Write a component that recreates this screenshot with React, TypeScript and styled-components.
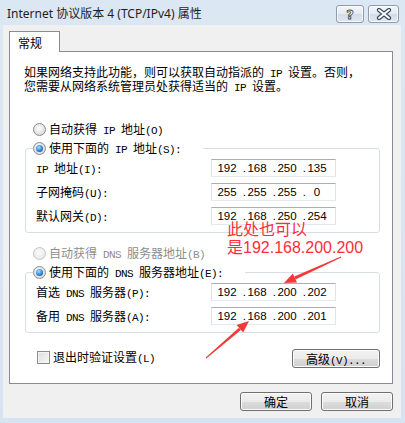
import React from 'react';
import styled, { createGlobalStyle } from 'styled-components';

const GlobalStyle = createGlobalStyle`
    html, body {
        margin: 0;
        padding: 0;
        background: #d9e4f1;
    }
    body {
        font-family: "Noto Sans CJK SC", "Noto Sans", sans-serif;
        font-size: 12px;
        line-height: 14px;
        color: #000;
    }
`;

const ipGroup = [
    { label: 'IP 地址(I):', octets: ['192', '168', '250', '135'] },
    { label: '子网掩码(U):', octets: ['255', '255', '255', '0'] },
    { label: '默认网关(D):', octets: ['192', '168', '250', '254'] },
];

const dnsGroup = [
    { label: '首选 DNS 服务器(P):', octets: ['192', '168', '200', '202'] },
    { label: '备用 DNS 服务器(A):', octets: ['192', '168', '200', '201'] },
];

// the dialog font sets latin at half width, so ascii runs get their own span
const sim = (text: string) =>
    text.split(/([\x20-\x7e]+)/).map((part, i) =>
        /^[\x20-\x7e]+$/.test(part) ? <Half key={i}>{part}</Half> : <React.Fragment key={i}>{part}</React.Fragment>,
    );

const IpBox = ({ octets }: { octets: string[] }) => (
    <IpInput>
        {octets.map((o, i) => (
            <React.Fragment key={i}>
                {i > 0 && <Dot>.</Dot>}
                <Octet>{o}</Octet>
            </React.Fragment>
        ))}
    </IpInput>
);

const App = () => (
    <>
        <GlobalStyle />
        <Window>
            <TitleBar>
                <Title>Internet 协议版本 4 (TCP/IPv4) 属性</Title>
                <CaptionButtons>
                    <CaptionBtn $w={28}>
                        <HelpGlyph>?</HelpGlyph>
                    </CaptionBtn>
                    <CaptionBtn $w={31}>
                        <svg width="16" height="12" viewBox="0 0 16 12">
                            <path d="M3 2 L13 10 M13 2 L3 10" stroke="#3b4656" strokeWidth="4.2" strokeLinecap="round" />
                            <path d="M3 2 L13 10 M13 2 L3 10" stroke="#fff" strokeWidth="2" strokeLinecap="round" />
                        </svg>
                    </CaptionBtn>
                </CaptionButtons>
            </TitleBar>
            <Client>
                <Tab>常规</Tab>
                <Panel>
                    <Intro>
                        <Line>{sim('如果网络支持此功能，则可以获取自动指派的 IP 设置。否则，')}</Line>
                        <Line>{sim('您需要从网络系统管理员处获得适当的 IP 设置。')}</Line>
                    </Intro>

                    <Option>
                        <Radio />
                        <Line>{sim('自动获得 IP 地址(O)')}</Line>
                    </Option>
                    <Group>
                        <Legend>
                            <Radio $checked />
                            <Line>{sim('使用下面的 IP 地址(S):')}</Line>
                        </Legend>
                        {ipGroup.map((r) => (
                            <Row key={r.label}>
                                <Line>{sim(r.label)}</Line>
                                <IpBox octets={r.octets} />
                            </Row>
                        ))}
                    </Group>

                    <Option $spaced $disabled>
                        <Radio $disabled />
                        <Line>{sim('自动获得 DNS 服务器地址(B)')}</Line>
                    </Option>
                    <Group>
                        <Legend>
                            <Radio $checked />
                            <Line>{sim('使用下面的 DNS 服务器地址(E):')}</Line>
                        </Legend>
                        {dnsGroup.map((r) => (
                            <Row key={r.label}>
                                <Line>{sim(r.label)}</Line>
                                <IpBox octets={r.octets} />
                            </Row>
                        ))}
                    </Group>

                    <BottomRow>
                        <Check>
                            <CheckBox />
                            <Line>{sim('退出时验证设置(L)')}</Line>
                        </Check>
                        <Button $w={88}>
                            <Line>{sim('高级(V)...')}</Line>
                        </Button>
                    </BottomRow>
                </Panel>
                <Footer>
                    <Button $w={72}>确定</Button>
                    <Button $w={72}>取消</Button>
                </Footer>
            </Client>

            <Note>
                此处也可以
                <br />
                是192.168.200.200
            </Note>
            <Arrows width="405" height="423" viewBox="0 0 405 423">
                <polygon points="341.2,257.5 340.8,256.5 294.3,276.6 295.5,279.4" fill="#f23a3a" />
                <polygon points="284,283 297,282.6 292.8,273.5" fill="#f23a3a" />
                <polygon points="206.3,358.4 205.7,357.6 238.9,327.7 240.9,329.9" fill="#f23a3a" />
                <polygon points="249,321 243.2,332.6 236.6,325" fill="#f23a3a" />
            </Arrows>
        </Window>
    </>
);

const Window = styled.div`
    position: relative;
    display: flex;
    flex-direction: column;
    width: 405px;
    height: 423px;
    background: linear-gradient(#dce7f4, #d6e3f1);
`;

const TitleBar = styled.div`
    display: flex;
    align-items: center;
    justify-content: space-between;
    box-sizing: border-box;
    height: 25px;
    padding: 3px 6px 0 7px;
`;

const Title = styled.div`
    font-family: "Noto Sans", "Noto Sans CJK SC", sans-serif;
    font-size: 12px;
    color: #1e1e1e;
`;

const CaptionButtons = styled.div`
    display: flex;
    gap: 4px;
`;

const CaptionBtn = styled.div<{ $w: number }>`
    display: flex;
    align-items: center;
    justify-content: center;
    box-sizing: border-box;
    width: ${(p) => p.$w}px;
    height: 18px;
    border: 1px solid #8d9cb0;
    border-radius: 3px;
    background: linear-gradient(#f4f7fb, #e3eaf3 50%, #d3dde9 51%, #dfe7f1);
    box-shadow: inset 0 0 0 1px rgba(255, 255, 255, 0.7);
`;

const HelpGlyph = styled.span`
    font-family: "DejaVu Sans", sans-serif;
    font-weight: bold;
    font-size: 13px;
    line-height: 1;
    color: #fff;
    -webkit-text-stroke: 0.8px #3b4656;
`;

const Client = styled.div`
    display: flex;
    flex-direction: column;
    flex: 1;
    margin: 0 4px 5px 3px;
    padding: 6px 8px 0 6px;
    background: #f0f0f0;
`;

const Tab = styled.div`
    position: relative;
    z-index: 1;
    box-sizing: border-box;
    width: 51px;
    height: 21px;
    margin-bottom: -1px;
    padding: 4px 0 0 8px;
    border: 1px solid #898c95;
    border-bottom: none;
    background: #fff;
`;

const Panel = styled.div`
    display: flex;
    flex-direction: column;
    box-sizing: border-box;
    height: 333px;
    padding: 12px 12px 0 14px;
    border: 1px solid #898c95;
    background: #fff;
`;

const Line = styled.span`
    display: block;
    height: 14px;
    line-height: 14px;
    white-space: pre;
`;

const Half = styled.span`
    font-family: "Liberation Mono", monospace;
    font-size: 11px;
    line-height: 1;
    letter-spacing: -0.6px;
`;

const Intro = styled.div`
    display: flex;
    flex-direction: column;
    margin-top: 1px;
`;

const Option = styled.div<{ $spaced?: boolean; $disabled?: boolean }>`
    display: flex;
    align-items: center;
    gap: 3px;
    height: 16px;
    margin: ${(p) => (p.$spaced ? '12px' : '28px')} 0 0 9px;
    color: ${(p) => (p.$disabled ? '#8d8d8d' : '#000')};
`;

const Radio = styled.span<{ $checked?: boolean; $disabled?: boolean }>`
    position: relative;
    flex: none;
    box-sizing: border-box;
    width: 13px;
    height: 13px;
    border-radius: 50%;
    border: 1px solid ${(p) => (p.$disabled ? '#c4c4c4' : '#8b8b8b')};
    background: ${(p) =>
        p.$disabled
            ? 'radial-gradient(circle at 45% 40%, #fafafa, #e6e6e6)'
            : 'radial-gradient(circle at 45% 40%, #f6f6f6 20%, #d2d2d2 90%)'};
    &::after {
        content: '';
        display: ${(p) => (p.$checked ? 'block' : 'none')};
        position: absolute;
        inset: 2px;
        border-radius: 50%;
        background: radial-gradient(circle at 40% 35%, #9fe2ff, #2c86d8 55%, #0b3d77);
    }
`;

const Group = styled.fieldset`
    margin: 3px 0 0 1px;
    padding: 0 0 4px 10px;
    border: 1px solid #d5dfe5;
    border-radius: 3px;
    min-width: 0;
`;

const Legend = styled.legend`
    display: flex;
    align-items: center;
    gap: 3px;
    height: 16px;
    margin-left: -3px;
    padding: 0 22px 0 0;
`;

const Row = styled.div`
    display: flex;
    align-items: center;
    justify-content: space-between;
    height: 24px;
    padding-right: 43px;
`;

const IpInput = styled.div`
    display: flex;
    align-items: center;
    box-sizing: border-box;
    width: 125px;
    height: 18px;
    padding-left: 4px;
    border: 1px solid #e2e3ea;
    border-top-color: #abadb3;
    border-bottom-color: #e3e9ef;
    background: #fff;
    font-family: "Liberation Sans", Arial, sans-serif;
    font-size: 11.5px;
`;

const Octet = styled.span`
    width: 22px;
    text-align: center;
`;

const Dot = styled.span`
    width: 8px;
    text-align: right;
`;

const BottomRow = styled.div`
    display: flex;
    align-items: center;
    justify-content: space-between;
    margin: 16px 0 0 13px;
`;

const Check = styled.div`
    display: flex;
    align-items: center;
    gap: 3px;
    margin-top: -3px;
`;

const CheckBox = styled.span`
    box-sizing: border-box;
    width: 13px;
    height: 13px;
    border: 1px solid #8b8b8b;
    background: linear-gradient(135deg, #dcdcdc, #f8f8f8);
    box-shadow: inset 0 0 0 1px #f4f4f4;
`;

const Button = styled.div<{ $w: number }>`
    display: flex;
    align-items: center;
    justify-content: center;
    box-sizing: border-box;
    width: ${(p) => p.$w}px;
    height: 19px;
    border: 1px solid #707070;
    border-radius: 3px;
    background: linear-gradient(#f2f2f2, #ebebeb 50%, #dddddd 51%, #cfcfcf);
    box-shadow: inset 0 0 0 1px #fcfcfc;
`;

const Footer = styled.div`
    display: flex;
    justify-content: flex-end;
    gap: 9px;
    margin-top: 8px;
`;

const Note = styled.div`
    position: absolute;
    left: 227px;
    top: 221px;
    color: #ff2d3a;
    font-family: "Liberation Sans", "Noto Sans CJK SC", sans-serif;
    font-size: 16px;
    line-height: 18px;
    pointer-events: none;
`;

const Arrows = styled.svg`
    position: absolute;
    left: 0;
    top: 0;
    pointer-events: none;
`;

export default App;
